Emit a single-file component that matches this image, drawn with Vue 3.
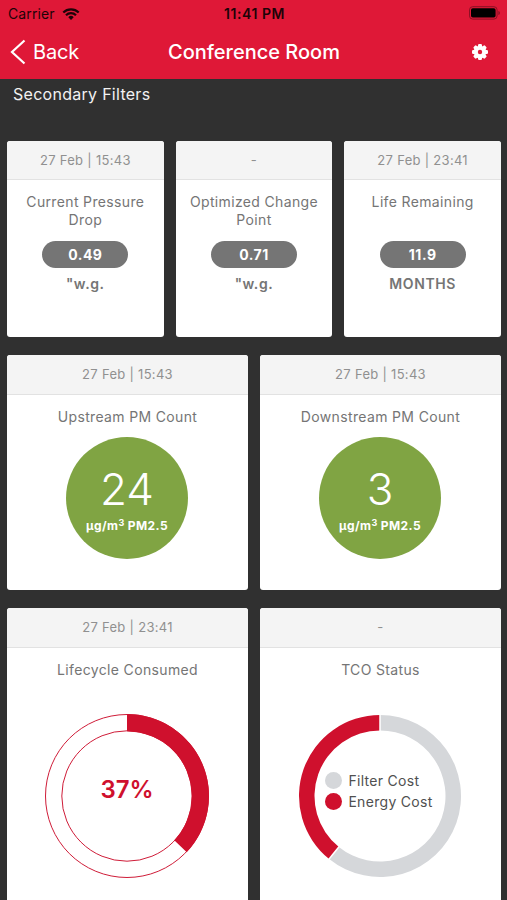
<template>
  <div class="screen">
    <header>
      <div class="status-bar">
        <div class="network">
          <span>Carrier</span>
          <svg class="wifi" viewBox="0 0 18 12" width="18" height="12">
            <path d="M1.3 4.5a11 11 0 0 1 15.4 0" />
            <path d="M4 7.3a7 7 0 0 1 10 0" />
            <path class="dot" d="M9 11.9L6.3 9.2a3.8 3.8 0 0 1 5.4 0z" />
          </svg>
        </div>
        <b>11:41 PM</b>
        <svg class="battery" viewBox="0 0 32 14" width="32" height="14">
          <rect class="shell" x="0.5" y="0.7" width="27.6" height="12.4" rx="3.2" />
          <rect x="2" y="2.2" width="24.6" height="9.4" rx="1.8" />
          <path class="cap" d="M29.4 5v4c1-.3 1.5-1.1 1.5-2s-.5-1.7-1.5-2z" />
        </svg>
      </div>
      <nav>
        <div class="back">
          <svg viewBox="0 0 16 26" width="16" height="26"><path d="M14.5 1.5L2 13l12.5 11.5" /></svg>
          <span>Back</span>
        </div>
        <h1>Conference Room</h1>
        <svg class="gear" viewBox="0 0 16 16" width="16" height="16">
          <rect v-for="a in [0, 45, 90, 135]" :key="a" x="6" y="0" width="4" height="16" rx="1.2"
                :transform="`rotate(${a} 8 8)`" />
          <circle cx="8" cy="8" r="6.3" />
          <circle class="hole" cx="8" cy="8" r="2.2" />
        </svg>
      </nav>
    </header>

    <h2>Secondary Filters</h2>

    <main>
      <section class="row three">
        <article class="card" v-for="r in readings" :key="r.title">
          <div class="date">{{ r.date }}</div>
          <h3>{{ r.title }}</h3>
          <div class="pill">{{ r.value }}</div>
          <div class="unit">{{ r.unit }}</div>
        </article>
      </section>

      <section class="row">
        <article class="card" v-for="c in counts" :key="c.title">
          <div class="date">{{ c.date }}</div>
          <h3>{{ c.title }}</h3>
          <div class="bubble">
            <span class="num">{{ c.value }}</span>
            <span class="pm">µg/m<sup>3</sup> PM2.5</span>
          </div>
        </article>
      </section>

      <section class="row charts">
        <article class="card">
          <div class="date">27 Feb | 23:41</div>
          <h3>Lifecycle Consumed</h3>
          <div class="chart">
            <svg viewBox="-83 -83 166 166" width="166" height="166">
              <circle class="line" r="81.5" />
              <circle class="line" r="65.2" />
              <path class="red" :d="arc(0, consumed / 100, 82, 64.8)" />
            </svg>
            <b class="percent">{{ consumed }}%</b>
          </div>
        </article>
        <article class="card">
          <div class="date">-</div>
          <h3>TCO Status</h3>
          <div class="chart">
            <svg viewBox="-83 -83 166 166" width="166" height="166">
              <path class="grey" :d="arc(0, 0.608, 81, 65.5)" />
              <path class="red" :d="arc(0.608, 1, 81, 65.5)" />
              <path class="gap" d="M0 -82V-65" />
              <path class="gap" d="M0 -82V-65" transform="rotate(218.9)" />
            </svg>
            <ul>
              <li><i class="filter"></i>Filter Cost</li>
              <li><i class="energy"></i>Energy Cost</li>
            </ul>
          </div>
        </article>
      </section>
    </main>
  </div>
</template>

<script setup>
const readings = [
  { date: '27 Feb | 15:43', title: 'Current Pressure Drop', value: '0.49', unit: '"w.g.' },
  { date: '-', title: 'Optimized Change Point', value: '0.71', unit: '"w.g.' },
  { date: '27 Feb | 23:41', title: 'Life Remaining', value: '11.9', unit: 'MONTHS' },
]

const counts = [
  { date: '27 Feb | 15:43', title: 'Upstream PM Count', value: 24 },
  { date: '27 Feb | 15:43', title: 'Downstream PM Count', value: 3 },
]

const consumed = 37

// ring segment, from and to are fractions of a turn clockwise from the top
function arc(from, to, outer, inner) {
  const point = (t, r) => `${r * Math.sin(t * 2 * Math.PI)} ${-r * Math.cos(t * 2 * Math.PI)}`
  const large = to - from > 0.5 ? 1 : 0
  return `M${point(from, outer)}A${outer} ${outer} 0 ${large} 1 ${point(to, outer)}` +
    `L${point(to, inner)}A${inner} ${inner} 0 ${large} 0 ${point(from, inner)}Z`
}
</script>

<style>
body { margin: 0; background: #303030; }
</style>

<style scoped>
* { box-sizing: border-box; margin: 0; padding: 0; }

.screen { height: 900px; overflow: hidden; background: #303030;
          font-family: Inter, "Liberation Sans", sans-serif; color: #757575; }

header { height: 79px; background: #df1837; }

.status-bar { display: grid; grid-template-columns: 1fr auto 1fr; align-items: center;
              height: 27px; padding: 0 6px 0 8px; color: #1d0307; font-size: 14px; }
.status-bar b { font-weight: 600; letter-spacing: 0.55px; }
.network { display: flex; align-items: center; gap: 7px; letter-spacing: 0.1px; }
.wifi { fill: none; stroke: #1d0307; stroke-width: 2.2; }
.wifi .dot { fill: #1d0307; stroke: none; }
.battery { justify-self: end; margin-top: -1px; fill: #000; }
.battery .shell { fill: none; stroke: #8b1024; }
.battery .cap { fill: #8b1024; }

nav { display: grid; grid-template-columns: 1fr auto 1fr; align-items: center; height: 50px;
      padding: 0 19px 0 10px; color: #fff; }
.back { display: flex; align-items: center; gap: 7px; font-size: 20px; letter-spacing: -0.2px; }
.back svg { fill: none; stroke: #fff; stroke-width: 2.2; }
h1 { padding-left: 10px; font-size: 20px; font-weight: 500; }
.gear { justify-self: end; fill: #fff; }
.gear .hole { fill: #df1837; }

h2 { height: 61.5px; padding: 5px 13px; color: #f2f2f2; font-size: 16px; font-weight: 400;
     line-height: 21px; letter-spacing: 0.28px; }

main { display: flex; flex-direction: column; gap: 18px; padding: 0 6px 0 7px; }
.row { display: grid; grid-template-columns: 1fr 1fr; gap: 12px; height: 235px; }
.three { grid-template-columns: 1fr 1fr 1fr; height: 196.6px; }
.charts { height: 310px; }

.card { display: flex; flex-direction: column; align-items: center; overflow: hidden;
        background: #fff; border-radius: 3px; text-align: center; }
.date { align-self: stretch; height: 39.5px; background: #f4f4f4; border-bottom: 1px solid #e2e2e2;
        color: #909090; font-size: 13px; line-height: 38px; letter-spacing: 0.3px; }
h3 { margin-top: 13px; padding: 0 10px; font-size: 14px; font-weight: 400; line-height: 18.5px;
     letter-spacing: 0.35px; }

.three h3 { height: 37px; line-height: 18px; }
.pill { width: 86px; height: 27px; margin-top: 10.5px; border-radius: 14px; background: #757575;
        color: #fff; font-size: 14px; font-weight: 700; line-height: 27px; letter-spacing: 0.5px; }
.unit { margin-top: 6px; font-size: 14px; font-weight: 600; line-height: 20px; letter-spacing: 0.6px; }

.bubble { display: flex; flex-direction: column; align-items: center; width: 122px; height: 122px;
          margin: 11px 1px 0 0; border-radius: 50%; background: #80a443; color: #fff; }
.num { margin-top: 28px; font-size: 44px; font-weight: 300; line-height: 48px; }
.pm { margin-top: 4px; font-size: 12px; font-weight: 700; line-height: 18px; letter-spacing: 0.4px; }
.pm sup { font-size: 9px; line-height: 0; vertical-align: 4px; }

.chart { display: grid; place-items: center; margin: 33.5px 1px 0 0; }
.chart > * { grid-area: 1 / 1; }
.line { fill: none; stroke: #cf1c38; stroke-width: 1; }
.red { fill: #cf102d; }
.grey { fill: #d5d7da; }
.gap { stroke: #fff; stroke-width: 1.5; }
.percent { padding-bottom: 13px; color: #cf102d; font-size: 24px; font-weight: 600; }
ul { list-style: none; padding: 0 2px 9px 0; color: #505050; font-size: 14px; line-height: 21px;
     letter-spacing: 0.3px; }
li { display: flex; align-items: center; gap: 6px; }
li i { width: 17px; height: 17px; border-radius: 50%; }
.filter { background: #d5d7da; }
.energy { background: #cf102d; }
</style>
